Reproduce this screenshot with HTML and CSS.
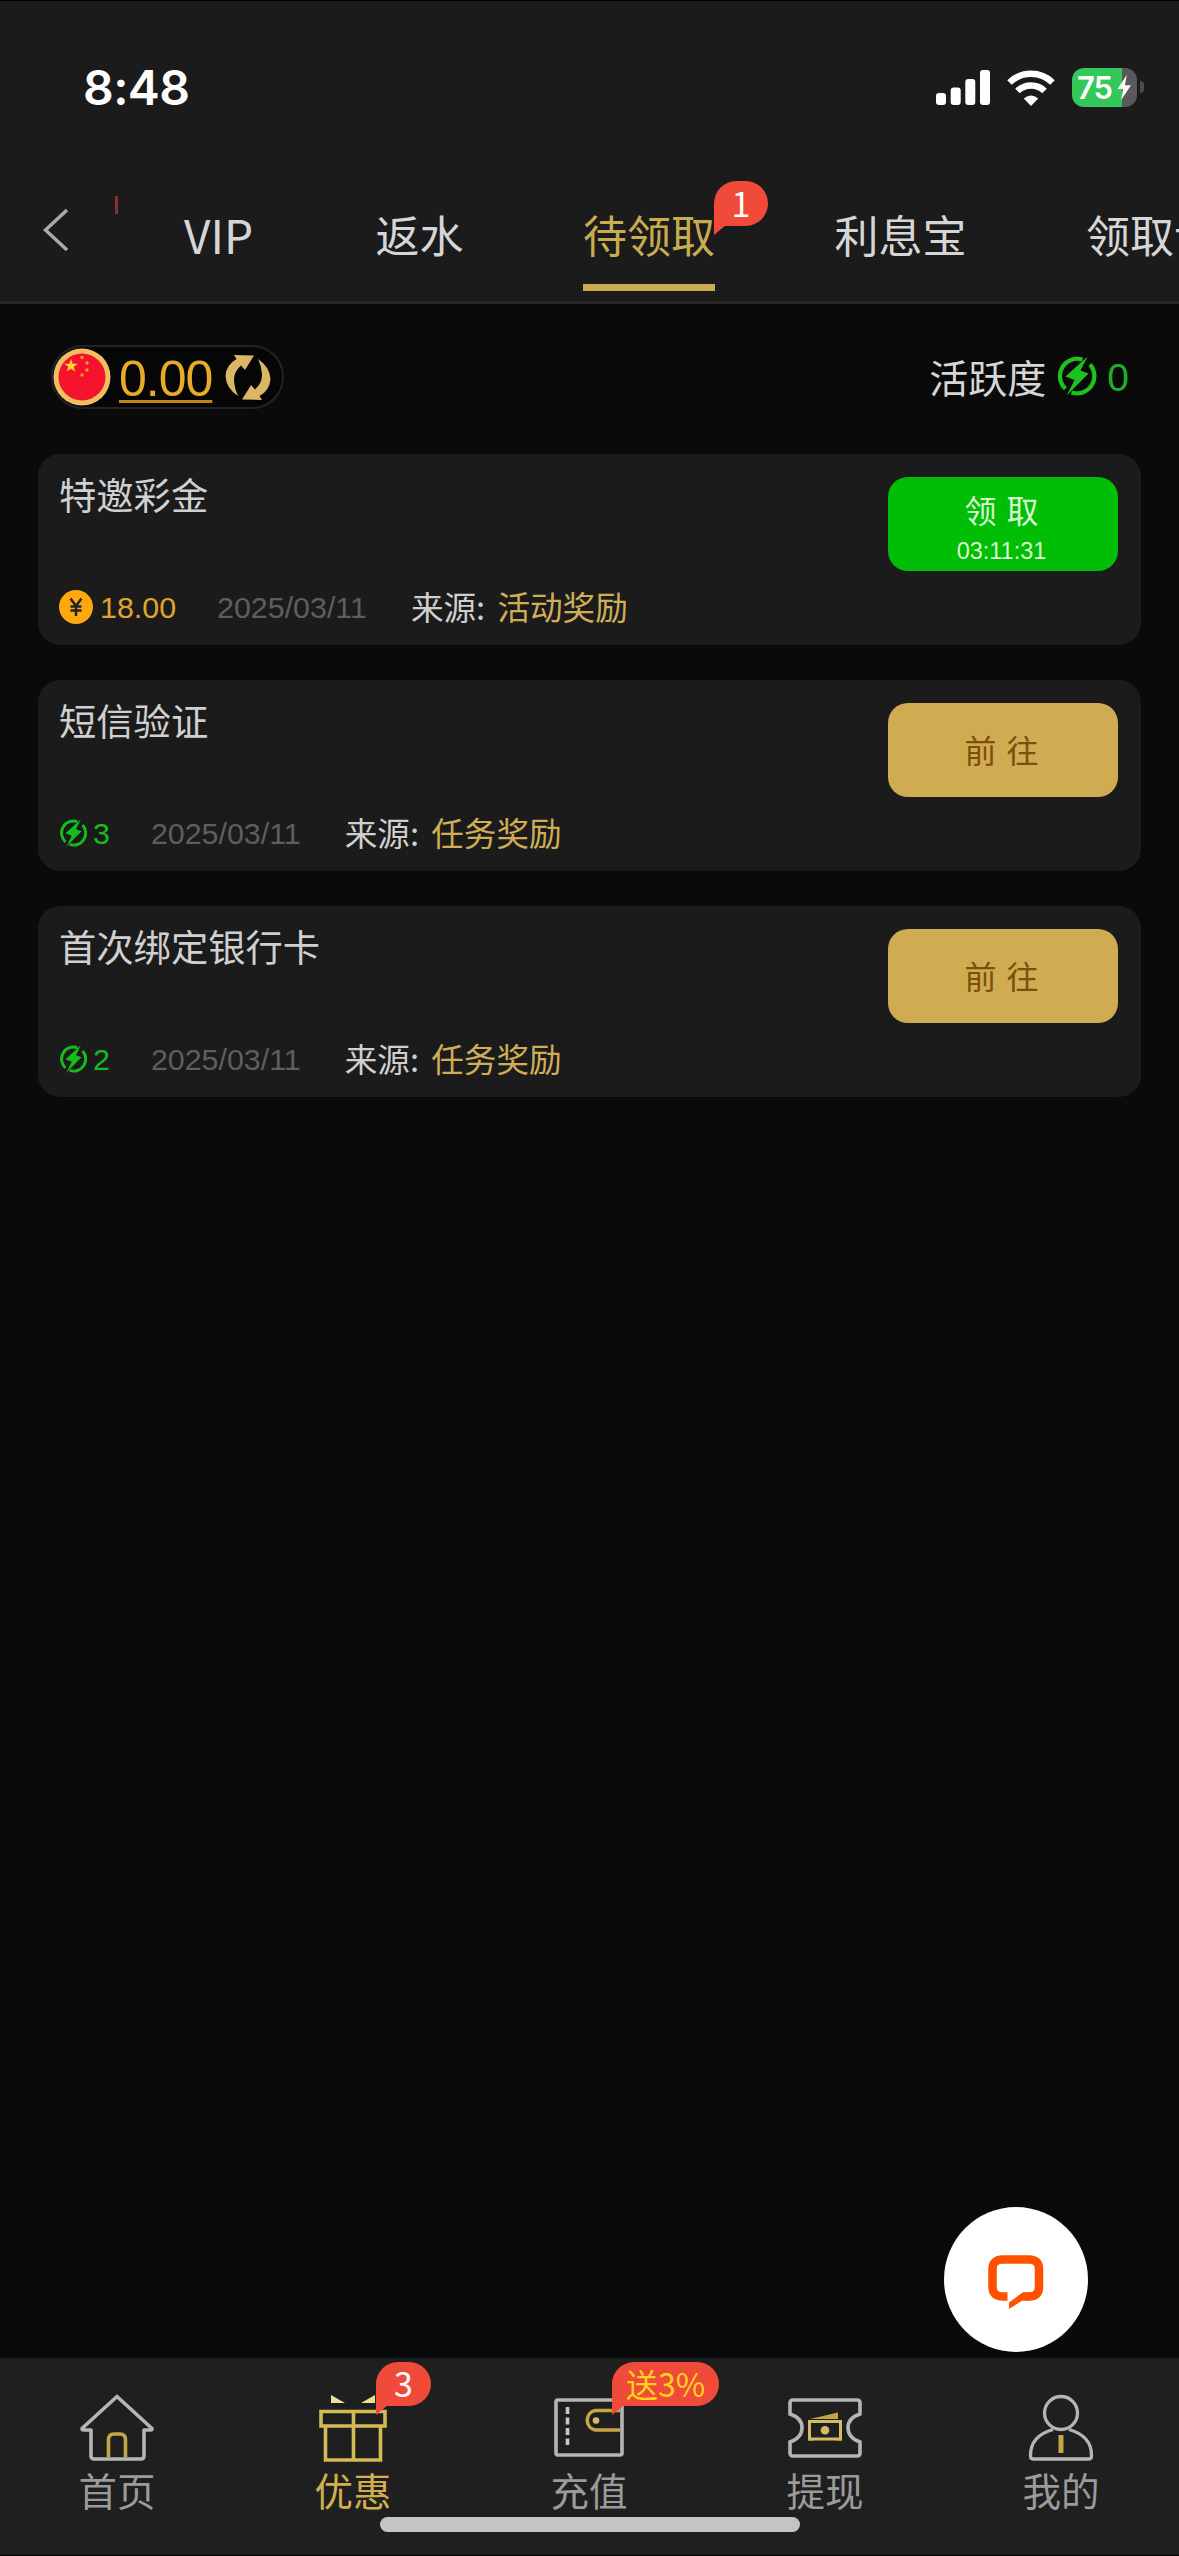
FILE: index.html
```html
<!DOCTYPE html>
<html lang="zh-CN">
<head>
<meta charset="utf-8">
<title>待领取</title>
<link rel="stylesheet" href="styles.css">
</head>
<body>
<svg class="defs" width="0" height="0">
  <symbol id="bolt" viewBox="0 0 40 40">
    <path d="M25.500 3.600A17.300 17.300 0 0 0 8.500 32.800M14.500 36.400A17.300 17.300 0 0 0 33 8.500" fill="none" stroke="currentColor" stroke-width="4.200"/>
    <path d="M30.500 0.500L8.500 20.500L17.500 24L9.500 39.800L31.500 17.500L23.500 14.500Z" fill="currentColor"/>
  </symbol>
</svg>
<div class="page">
  <header class="header">
    <div class="status">
      <span class="clock">8:48</span>
      <div class="status-icons">
        <svg width="54" height="36" viewBox="0 0 54 36" fill="#fff"><rect x="0" y="23" width="10" height="12" rx="3"/><rect x="14.700" y="17.500" width="10" height="17.500" rx="3"/><rect x="29.300" y="9" width="10" height="26" rx="3"/><rect x="44" y="0" width="10" height="35" rx="3"/></svg>
        <svg width="48" height="36" viewBox="0 0 48 36"><path d="M2.500 12.500A31 31 0 0 1 45.500 12.500M10.500 21A19.500 19.500 0 0 1 37.500 21" fill="none" stroke="#fff" stroke-width="6.500"/><path d="M24 36L16.800 28.500Q24 22.500 31.200 28.500Z" fill="#fff"/></svg>
        <div class="battery"><span class="battery-text">75</span><svg width="16" height="25" viewBox="0 0 16 27"><path d="M11 0L1 15H7L5 27L15.500 11H9Z" fill="#fff"/></svg></div>
      </div>
    </div>
    <nav class="tabs-row">
      <svg class="back" width="28" height="44" viewBox="0 0 28 44"><path d="M25 2L3.500 22L25 42" fill="none" stroke="#a9a9a9" stroke-width="3.500"/></svg>
      <div class="tabs">
        <span class="clipped-badge"></span>
        <span class="tab tab-latin">VIP</span>
        <span class="tab">返水</span>
        <span class="tab active">待领取<b class="badge tab-badge"><i>1</i></b></span>
        <span class="tab">利息宝</span>
        <span class="tab">领取记录</span>
      </div>
    </nav>
  </header>

  <main class="main">
    <div class="summary">
      <div class="balance">
        <svg width="58" height="58" viewBox="0 0 58 58"><circle cx="29" cy="29" r="28.500" fill="#f3bd62"/><circle cx="29" cy="29" r="23.500" fill="#f5122d"/><path fill="#ffda2c" d="M18 11l1.700 4.700 5 .1-4 3 1.500 4.800-4.200-2.900-4.200 2.900 1.500-4.800-4-3 5-.1z"/><g fill="#f7962a"><circle cx="29" cy="9.500" r="1.700"/><circle cx="34" cy="15" r="1.700"/><circle cx="34" cy="22" r="1.700"/><circle cx="29" cy="27" r="1.700"/></g></svg>
        <span class="amount">0.00</span>
        <svg class="refresh" width="46" height="47" viewBox="0 0 46 47" fill="#d9b765"><path d="M9 1L29 1.500L20 16L16 11.500Q8.500 18 9 27Q9.500 35 13 42Q1 34 .5 22Q1 11 11.500 5Z"/><path d="M37 46L17 45.500L26 31L30 35.500Q37.500 29 37 20Q36.500 12 33 5Q45 13 45.500 25Q45 36 34.500 42Z"/></svg>
      </div>
      <div class="activity"><span>活跃度</span><svg width="40" height="40"><use href="#bolt"/></svg><span class="activity-num">0</span></div>
    </div>

    <section class="card">
      <div class="info">
        <h2 class="title">特邀彩金</h2>
        <div class="meta">
          <span class="value gold"><svg width="34" height="34" viewBox="0 0 34 34"><circle cx="17" cy="17" r="17" fill="#ffa90f"/><path d="M11.500 8.500L17 16L22.500 8.500M17 15V26M11.500 16.500H22.500M11.500 20.500H22.500" fill="none" stroke="#222" stroke-width="2.500"/></svg>18.00</span>
          <span class="date">2025/03/11</span>
          <span class="source">来源: <em>活动奖励</em></span>
        </div>
      </div>
      <button class="btn claim"><span>领 取</span><small>03:11:31</small></button>
    </section>
    <section class="card">
      <div class="info">
        <h2 class="title">短信验证</h2>
        <div class="meta">
          <span class="value green"><svg width="29" height="28" viewBox="0 0 40 40"><use href="#bolt"/></svg>3</span>
          <span class="date">2025/03/11</span>
          <span class="source">来源: <em>任务奖励</em></span>
        </div>
      </div>
      <button class="btn go">前 往</button>
    </section>
    <section class="card">
      <div class="info">
        <h2 class="title">首次绑定银行卡</h2>
        <div class="meta">
          <span class="value green"><svg width="29" height="28" viewBox="0 0 40 40"><use href="#bolt"/></svg>2</span>
          <span class="date">2025/03/11</span>
          <span class="source">来源: <em>任务奖励</em></span>
        </div>
      </div>
      <button class="btn go">前 往</button>
    </section>
  </main>

  <nav class="bottom">
    <div class="item">
      <svg width="74" height="68" viewBox="0 0 74 68" fill="none" stroke-width="3.600"><path d="M37 2.500L72 34.500Q72 36 70.500 36H64V62Q64 65 61 65H14Q11 65 11 62V36H3.500Q2 36 2 34.500Z" stroke="#b5b5b5" stroke-linejoin="round"/><path d="M28.500 63.500V46Q28.500 40 34 40H40Q45.500 40 45.500 46V63.500" stroke="#c5a545"/></svg>
      <span>首页</span>
    </div>
    <div class="item on">
      <svg width="68" height="68" viewBox="0 0 68 68" fill="none" stroke="#d3ba55" stroke-width="3.600"><path d="M2 17.500H66V32H2ZM6.500 32V66H61.500V32M34.500 17.500V66"/><path d="M12 1L26 9H12ZM56 1L42 9H56Z" fill="#eee08e" stroke="none"/></svg>
      <span>优惠</span>
      <b class="badge gift-badge"><i>3</i></b>
    </div>
    <div class="item">
      <svg width="70" height="68" viewBox="0 0 70 68" fill="none" stroke-width="3.600"><path d="M66 36H41A10 10 0 0 1 41 16.500H66" stroke="#c5a545"/><rect x="2" y="6" width="66" height="55" rx="2" stroke="#b5b5b5"/><path d="M13.500 13V51" stroke="#c8c8c8" stroke-dasharray="7 3.500"/><circle cx="42" cy="26.500" r="3.300" fill="#d3ba65"/></svg>
      <span>充值</span>
      <b class="badge pay-badge"><i>送3%</i></b>
    </div>
    <div class="item">
      <svg width="74" height="68" viewBox="0 0 74 68" fill="none" stroke-width="3.600"><path d="M5 6H69Q72 6 72 9V20Q60 24 60 33.500Q60 44 72 48V59Q72 62 69 62H5Q2 62 2 59V48Q14 44 14 33.500Q14 24 2 20V9Q2 6 5 6Z" stroke="#b5b5b5"/><rect x="21.500" y="27.500" width="31" height="17.500" stroke="#d3ba65" stroke-width="3"/><path d="M22 25L50 18.500V25Z" fill="#c5a545"/><path d="M20 26h6l-6 6zM54 26h-6l6 6zM20 46.500h6l-6-6zM54 46.500h-6l6-6z" fill="#d3ba65"/><circle cx="37" cy="36.300" r="4.300" fill="#d3ba65"/></svg>
      <span>提现</span>
    </div>
    <div class="item">
      <svg width="66" height="68" viewBox="0 0 66 68" fill="none" stroke="#b5b5b5" stroke-width="3.300"><circle cx="33" cy="19" r="16.500"/><path d="M25 35.500Q2 42 2.500 62Q2.500 65 5 65H61Q63.500 65 63.500 62Q64 42 41 35.500"/><path d="M33 41V59" stroke="#c5a545" stroke-width="5"/></svg>
      <span>我的</span>
    </div>
  </nav>
  <button class="chat"><svg width="56" height="58" viewBox="0 0 56 58"><path d="M19.500 45.500H15Q4.500 45.500 4.500 36V18Q4.500 8.500 15 8.500H41Q51 8.500 51 18V36Q51 45.500 41 45.500H38" fill="none" stroke="#ff5100" stroke-width="8.500"/><path d="M21 58V51.500L35 41.200H41V49.700H34Z" fill="#ff5100"/></svg></button>
  <div class="home-indicator"></div>
</div>
</body>
</html>
```
FILE: styles.css
```css
* { box-sizing: border-box; }
body { margin: 0; background: #000; font-family: "Liberation Sans", "Noto Sans CJK SC", sans-serif; }
svg { display: block; flex: none; }
i, em { font-style: normal; }
button { border: 0; padding: 0; font: inherit; }
.defs { position: absolute; }

.page { position: relative; width: 1179px; height: 2556px; padding: 1px 0; display: flex; flex-direction: column; background: #000; overflow: hidden; }

.header { height: 303px; background: #1b1b1b; border-bottom: 3px solid #262626; display: flex; flex-direction: column; }
.status { height: 172px; padding: 1px 42px 0 83px; display: flex; justify-content: space-between; align-items: center; }
.clock { font: 600 48px/58px Inter, sans-serif; color: #fff; letter-spacing: -0.6px; }
.status-icons { display: flex; align-items: center; gap: 17px; }
.battery { position: relative; width: 65px; height: 39px; border-radius: 12px; background: linear-gradient(90deg, #34c759 77%, #59595d 77%); display: flex; align-items: center; padding-left: 5px; }
.battery::after { content: ""; position: absolute; left: 68px; top: 13px; width: 4px; height: 12px; border-radius: 0 4px 4px 0; background: #4c4c4e; }
.battery-text { font: 600 31px/39px Inter, sans-serif; letter-spacing: -1px; color: #fff; margin-right: 1px; width: 38px; }

.tabs-row { flex: 1; display: flex; align-items: center; padding-left: 42px; }
.back { margin-top: -14px; }
.tabs { position: relative; flex: 1; min-width: 0; height: 100%; margin-left: 45px; padding-left: 69px; display: flex; gap: 119.500px; align-items: center; overflow: hidden; white-space: nowrap; }
.tab { position: relative; flex: none; padding-bottom: 6px; font: 44px/122px "Noto Sans CJK SC", sans-serif; color: #d6d6d6; }
.tab-latin { width: 72px; font-size: 46px; }
.tab.active { color: #c9ac50; }
.tab.active::after { content: ""; position: absolute; left: 0; right: 0; top: 111px; height: 7px; background: #c9ac50; }
.clipped-badge { position: absolute; left: 0; top: 23px; width: 3px; height: 18px; background: #8c2f2f; }

.badge { position: absolute; display: flex; align-items: center; justify-content: center; background: #f04a3a; border-radius: 25px 25px 25px 0; color: #fff; font: 400 34px/1 "Noto Sans CJK SC", sans-serif; }
.badge::after { content: ""; position: absolute; left: 0; top: 100%; margin-top: -1px; width: 12px; height: 10px; background: inherit; clip-path: polygon(0 0, 100% 0, 0 100%); }
.badge i { margin-top: -2px; }
.tab-badge { left: 131px; top: 8px; width: 54px; height: 45px; }

.main { flex: 1; background: #0a0a0a; padding: 41px 38px 0; }
.summary { display: flex; justify-content: space-between; align-items: flex-start; height: 109px; padding: 0 12px 0 13px; }
.balance { width: 233px; height: 64px; border: 2px solid #232325; border-radius: 32px; background: #060606; display: flex; align-items: center; }
.amount { margin-left: 8px; padding-top: 4px; font-size: 50px; letter-spacing: -1px; line-height: 60px; color: #e6ac28; text-decoration: underline; text-decoration-color: #c08618; text-decoration-thickness: 3px; text-underline-offset: 4px; }
.refresh { margin-left: 13px; }
.activity { height: 62px; display: flex; align-items: center; font-size: 39px; color: #d6d6d6; }
.activity svg { margin-left: 11px; color: #1fc11f; }
.activity-num { margin-left: 10px; padding-top: 3px; color: #1fae2b; }

.card { height: 191px; margin-bottom: 35px; border-radius: 22px; background: #1b1b1b; display: flex; justify-content: space-between; padding: 23px 23px 18px 21px; }
.info { display: flex; flex-direction: column; justify-content: space-between; }
.title { margin: -3px 0 0; font: 400 37.300px/40px "Noto Sans CJK SC", sans-serif; color: #d0d0d0; }
.meta { height: 40px; display: flex; align-items: center; font-size: 30.400px; line-height: 40px; }
.value { display: flex; align-items: center; }
.value.gold { color: #e0a52b; gap: 7px; }
.value.green { color: #14bd1c; gap: 5px; }
.date { color: #5e5e5e; margin: 0 44px 0 41px; }
.source { margin-top: -3px; color: #cfcfcf; font: 32.600px/40px "Noto Sans CJK SC", sans-serif; }
.source em { color: #cfae57; margin-left: 5px; }
.btn { width: 230px; height: 94px; border-radius: 20px; display: flex; flex-direction: column; align-items: center; justify-content: center; padding-right: 3px; font: 32px/40px "Noto Sans CJK SC", sans-serif; word-spacing: 3px; }
.claim { padding-top: 6px; background: #00bd05; color: #d9f7d0; }
.claim small { font: 23.500px/30px "Liberation Sans", sans-serif; margin-top: 7px; }
.go { padding-bottom: 2px; background: #cfab51; color: #7d4f0c; }

.bottom { height: 197px; background: #1f1f1f; display: grid; grid-template-columns: repeat(5, 236px); }
.item { position: relative; display: flex; flex-direction: column; align-items: center; padding: 36px 2px 0 0; color: #9b9b9b; font: 38.500px/56px "Noto Sans CJK SC", sans-serif; }
.item span { margin-top: -1px; }
.item.on { color: #d0b04c; }
.gift-badge { left: 140px; top: 4px; width: 55px; height: 44px; }
.pay-badge { left: 140px; top: 4px; width: 107px; height: 44px; color: #ffd21c; font-size: 32px; }
.chat { position: absolute; left: 944px; top: 2207px; width: 144px; height: 145px; border-radius: 50%; background: #fff; display: flex; align-items: center; justify-content: center; }
.home-indicator { position: absolute; left: 380px; top: 2517px; width: 420px; height: 15px; border-radius: 8px; background: #c4c4c4; }
```
